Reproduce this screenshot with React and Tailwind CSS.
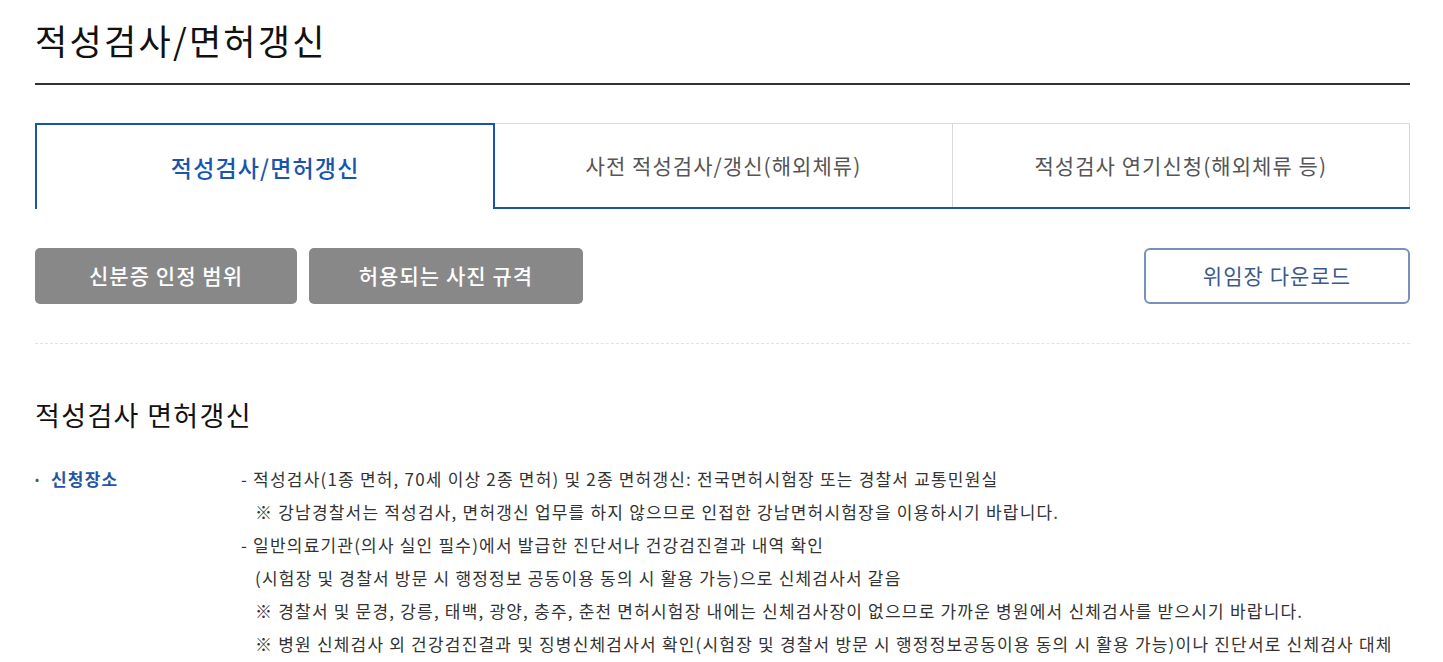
export default function App() {
  const tabs = [
    { label: '적성검사/면허갱신', active: true },
    { label: '사전 적성검사/갱신(해외체류)', active: false },
    { label: '적성검사 연기신청(해외체류 등)', active: false },
  ];

  const lines = [
    { text: '- 적성검사(1종 면허, 70세 이상 2종 면허) 및 2종 면허갱신: 전국면허시험장 또는 경찰서 교통민원실', indent: false },
    { text: '※ 강남경찰서는 적성검사, 면허갱신 업무를 하지 않으므로 인접한 강남면허시험장을 이용하시기 바랍니다.', indent: true },
    { text: '- 일반의료기관(의사 실인 필수)에서 발급한 진단서나 건강검진결과 내역 확인', indent: false },
    { text: '(시험장 및 경찰서 방문 시 행정정보 공동이용 동의 시 활용 가능)으로 신체검사서 갈음', indent: true },
    { text: '※ 경찰서 및 문경, 강릉, 태백, 광양, 충주, 춘천 면허시험장 내에는 신체검사장이 없으므로 가까운 병원에서 신체검사를 받으시기 바랍니다.', indent: true },
    { text: '※ 병원 신체검사 외 건강검진결과 및 징병신체검사서 확인(시험장 및 경찰서 방문 시 행정정보공동이용 동의 시 활용 가능)이나 진단서로 신체검사 대체', indent: true },
  ];

  return (
    <div
      className="min-h-screen bg-white text-[#222]"
      style={{ fontFamily: '"Noto Sans CJK KR", "Noto Sans", sans-serif' }}
    >
      <div className="w-[1375px] ml-[35px] pt-[14px]">
        {/* page title */}
        <h1 className="text-[35px] leading-[51px] font-normal text-[#111] tracking-[0.065em] pb-[18px] border-b-2 border-[#333]">
          적성검사/면허갱신
        </h1>

        {/* tabs */}
        <div className="mt-[38px] flex h-[86px] border-b-2 border-[#1a55ad]">
          {tabs.map((t, i) =>
            t.active ? (
              <div
                key={i}
                className="flex-1 flex items-center justify-center border-2 border-b-0 border-[#1a55ad] -mb-[2px] bg-white text-[23px] font-medium text-[#1a55ad] tracking-[0.05em]"
              >
                {t.label}
              </div>
            ) : (
              <div
                key={i}
                className="flex-1 flex items-center justify-center border-t border-r border-[#d9d9d9] text-[21px] text-[#555] tracking-[0.05em]"
              >
                {t.label}
              </div>
            )
          )}
        </div>

        {/* buttons */}
        <div className="mt-[39px] flex items-center">
          <button className="w-[262px] h-[56px] rounded-[5px] bg-[#888] text-white text-[21px] font-medium tracking-[0.05em]">
            신분증 인정 범위
          </button>
          <button className="ml-[12px] w-[274px] h-[56px] rounded-[5px] bg-[#888] text-white text-[21px] font-medium tracking-[0.05em]">
            허용되는 사진 규격
          </button>
          <button className="ml-auto w-[266px] h-[56px] rounded-[6px] border-2 border-[#7891bb] bg-white text-[#3b5a8c] text-[21px] tracking-[0.05em]">
            위임장 다운로드
          </button>
        </div>

        <div className="mt-[39px] border-t border-dashed border-[#e2e2e2]" />

        {/* section */}
        <h2 className="mt-[51px] text-[27px] leading-[39px] font-normal text-[#111] tracking-[0.05em]">
          적성검사 면허갱신
        </h2>

        <div className="mt-[28px] flex text-[17px] leading-[33px] tracking-[1.2px]">
          <div className="w-[206px] flex items-start shrink-0">
            <span className="w-[16px] text-[#555] text-[12px]">•</span>
            <span className="font-bold text-[#2355a5]">신청장소</span>
          </div>
          <div className="text-[#333]">
            {lines.map((l, i) => (
              <div key={i} className={l.indent ? 'pl-[14px]' : ''}>
                {l.text}
              </div>
            ))}
          </div>
        </div>
      </div>
    </div>
  );
}
